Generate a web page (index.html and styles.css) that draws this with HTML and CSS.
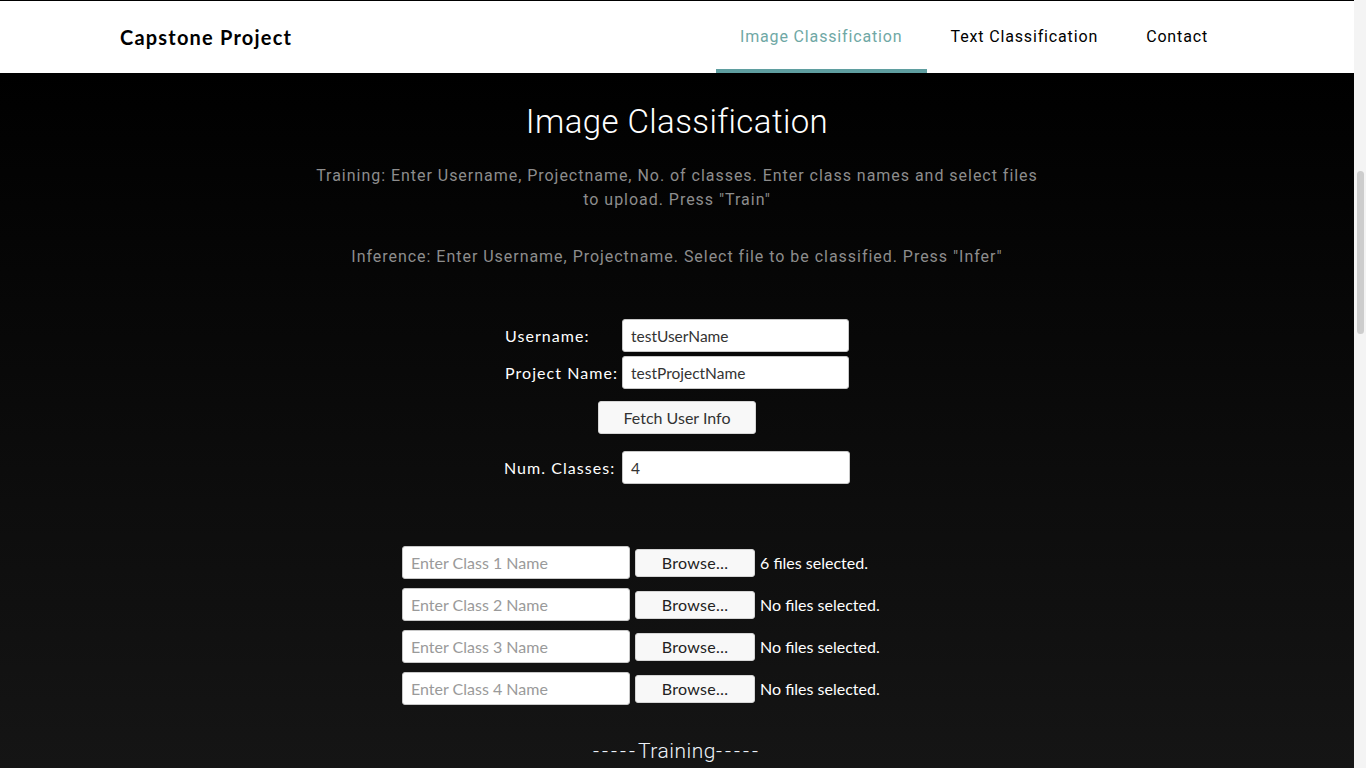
FILE: index.html
```html
<!DOCTYPE html>
<html lang="en">
<head>
<meta charset="utf-8">
<title>Capstone Project</title>
<link rel="stylesheet" href="styles.css">
</head>
<body>
<div class="window">
  <div class="page">
    <header class="navbar">
      <div class="container nav-inner">
        <a class="brand">Capstone Project</a>
        <nav class="links">
          <a class="link active">Image Classification</a>
          <a class="link">Text Classification</a>
          <a class="link">Contact</a>
        </nav>
      </div>
    </header>
    <main class="main">
      <h1 class="title">Image Classification</h1>
      <p class="info">Training: Enter Username, Projectname, No. of classes. Enter class names and select files to upload. Press "Train"</p>
      <p class="info second">Inference: Enter Username, Projectname. Select file to be classified. Press "Infer"</p>

      <div class="form">
        <div class="row">
          <label class="label">Username:</label>
          <div class="input">testUserName</div>
        </div>
        <div class="row gap-small">
          <label class="label">Project Name:</label>
          <div class="input">testProjectName</div>
        </div>
        <div class="btn-row">
          <div class="button">Fetch User Info</div>
        </div>
        <div class="row num-row">
          <label class="label">Num. Classes:</label>
          <div class="input num-input">4</div>
        </div>
      </div>

      <div class="classes">
        <div class="class-row">
          <div class="input class-input placeholder">Enter Class 1 Name</div>
          <div class="file">
            <div class="browse">Browse…</div>
            <span class="file-text">6 files selected.</span>
          </div>
        </div>
        <div class="class-row">
          <div class="input class-input placeholder">Enter Class 2 Name</div>
          <div class="file">
            <div class="browse">Browse…</div>
            <span class="file-text">No files selected.</span>
          </div>
        </div>
        <div class="class-row">
          <div class="input class-input placeholder">Enter Class 3 Name</div>
          <div class="file">
            <div class="browse">Browse…</div>
            <span class="file-text">No files selected.</span>
          </div>
        </div>
        <div class="class-row">
          <div class="input class-input placeholder">Enter Class 4 Name</div>
          <div class="file">
            <div class="browse">Browse…</div>
            <span class="file-text">No files selected.</span>
          </div>
        </div>
      </div>

      <h3 class="section"><span class="dashes">-----</span>Training<span class="dashes">-----</span></h3>
    </main>
  </div>
  <div class="scrollbar"><div class="thumb"></div></div>
</div>
</body>
</html>
```

FILE: styles.css
```css
html, body {
  margin: 0;
  padding: 0;
  height: 100%;
  overflow: hidden;
  background: #000;
}

.window {
  display: flex;
  height: 768px;
}

.page {
  flex: 1;
  display: flex;
  flex-direction: column;
  min-width: 0;
}

.scrollbar {
  width: 12px;
  background: #f4f4f4;
  padding-top: 171px;
  box-sizing: border-box;
  display: flex;
  justify-content: center;
}

.thumb {
  width: 7px;
  height: 163px;
  background: #cdcdcd;
  border-radius: 4px;
}

/* Navbar */
.navbar {
  background: #fff;
  border-top: 1px solid #000;
  height: 72px;
  flex: none;
}

.container {
  width: 1140px;
  margin: 0 auto;
  padding: 0 15px;
  box-sizing: border-box;
}

.nav-inner {
  display: flex;
  justify-content: space-between;
  align-items: stretch;
  height: 72px;
  padding-right: 15px;
}

.brand {
  font-family: Lato, "Noto Sans", sans-serif;
  font-weight: 700;
  font-size: 20px;
  letter-spacing: 1.2px;
  color: #000;
  display: flex;
  align-items: center;
  margin-left: -2px;
}

.links {
  display: flex;
}

.link {
  font-family: Roboto, "Liberation Sans", sans-serif;
  font-size: 16px;
  letter-spacing: 0.85px;
  color: #000;
  padding: 2px 24px 0;
  display: flex;
  align-items: center;
  border-bottom: 4px solid transparent;
}

.link.active {
  color: #6fa8a5;
  border-bottom-color: #5f9ea0;
}

/* Main */
.main {
  flex: 1;
  background: linear-gradient(#000 0%, #151515 100%);
  padding-top: 25px;
  display: flex;
  flex-direction: column;
  align-items: center;
  color: #fff;
}

.title {
  margin: 0;
  font-family: Roboto, "Liberation Sans", sans-serif;
  font-weight: 300;
  font-size: 33px;
  line-height: 48px;
  letter-spacing: 0.4px;
  color: #fff;
}

.info {
  margin: 18px 0 0;
  width: 740px;
  text-align: center;
  font-family: Roboto, "Liberation Sans", sans-serif;
  font-weight: 400;
  font-size: 16px;
  line-height: 24px;
  letter-spacing: 0.97px;
  color: #8d8d8d;
}

.info.second {
  margin-top: 33px;
}

/* Form */
.form {
  margin-top: 50px;
  display: flex;
  flex-direction: column;
  align-items: center;
}

.row {
  display: flex;
  align-items: center;
}

.row.gap-small {
  margin-top: 4px;
}

.label {
  width: 117px;
  font-family: Lato, "Noto Sans", sans-serif;
  font-size: 16px;
  letter-spacing: 1.05px;
  color: #fff;
}

.input {
  width: 227px;
  height: 33px;
  box-sizing: border-box;
  background: #fff;
  border: 1px solid #c8c8c8;
  border-radius: 3px;
  padding: 0 8px;
  display: flex;
  align-items: center;
  font-family: Lato, "Noto Sans", sans-serif;
  font-size: 15.5px;
  color: #333;
}

.num-input {
  width: 228px;
  margin-left: 1px;
}

.btn-row {
  margin-top: 12px;
  display: flex;
  justify-content: center;
}

.button {
  width: 158px;
  height: 33px;
  box-sizing: border-box;
  background: #f8f8f8;
  border: 1px solid #d5d5d5;
  border-radius: 3px;
  display: flex;
  align-items: center;
  justify-content: center;
  font-family: Lato, "Noto Sans", sans-serif;
  font-size: 16px;
  color: #333;
}

.num-row {
  margin-top: 17px;
}

/* Classes */
.classes {
  margin-top: 62px;
  display: flex;
  flex-direction: column;
  gap: 9px;
}

.class-row {
  display: flex;
  align-items: center;
  gap: 5px;
}

.class-input {
  width: 228px;
  font-size: 16px;
}

.placeholder {
  color: #9a9a9a;
}

.file {
  width: 317px;
  display: flex;
  align-items: center;
  gap: 5px;
}

.browse {
  width: 120px;
  height: 28px;
  box-sizing: border-box;
  background: #f8f8f8;
  border: 1px solid #d5d5d5;
  border-radius: 3px;
  display: flex;
  align-items: center;
  justify-content: center;
  font-family: Lato, "Noto Sans", sans-serif;
  font-size: 16px;
  letter-spacing: 0.3px;
  color: #222;
}

.file-text {
  font-family: Lato, "Noto Sans", sans-serif;
  font-size: 16px;
  color: #fff;
}

.section {
  margin: 34px 0 0;
  font-family: Roboto, "Liberation Sans", sans-serif;
  font-weight: 300;
  font-size: 21px;
  line-height: 24px;
  letter-spacing: 0.5px;
  color: #eef3fa;
}

.dashes {
  letter-spacing: 3px;
}
```
